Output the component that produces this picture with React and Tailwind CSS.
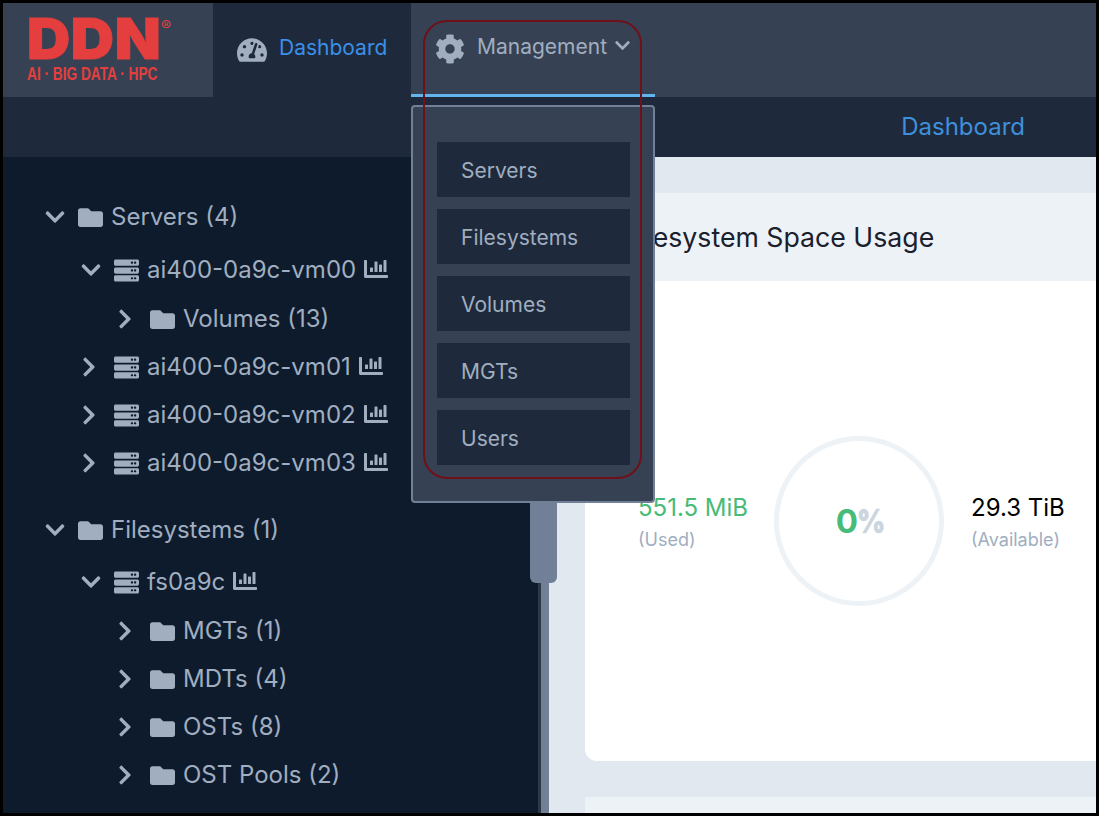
import { FaChartBar, FaChevronDown, FaChevronRight, FaCog, FaFolder, FaServer, FaTachometerAlt } from "react-icons/fa";

const menuItems = ["Servers", "Filesystems", "Volumes", "MGTs", "Users"];

const treeRows = [
  { label: "Servers (4)", level: 0, open: true, icon: FaFolder },
  { label: "ai400-0a9c-vm00", level: 1, open: true, icon: FaServer, chart: true, className: "mt-[5px]" },
  { label: "Volumes (13)", level: 2, icon: FaFolder, className: "mt-px" },
  { label: "ai400-0a9c-vm01", level: 1, icon: FaServer, chart: true },
  { label: "ai400-0a9c-vm02", level: 1, icon: FaServer, chart: true },
  { label: "ai400-0a9c-vm03", level: 1, icon: FaServer, chart: true },
  { label: "Filesystems (1)", level: 0, open: true, icon: FaFolder, className: "mt-[19px]" },
  { label: "fs0a9c", level: 1, open: true, icon: FaServer, chart: true, className: "mt-1" },
  { label: "MGTs (1)", level: 2, icon: FaFolder, className: "mt-px" },
  { label: "MDTs (4)", level: 2, icon: FaFolder },
  { label: "OSTs (8)", level: 2, icon: FaFolder },
  { label: "OST Pools (2)", level: 2, icon: FaFolder }
];

const indents = ["ml-0", "ml-9", "ml-[72px]"];

function TreeRow({ row }) {
  const Icon = row.icon;
  return (
    <div className={`flex h-12 items-center text-[24px] text-[#a0aec0] ${indents[row.level]} ${row.className || ""}`}>
      <span className="flex w-[33px] shrink-0 items-center">
        {row.open ? <FaChevronDown className="-ml-px h-[22px] w-[22px]" /> : <FaChevronRight className="-ml-[3px] h-[22px] w-[22px]" />}
      </span>
      <Icon className="h-[25px] w-[25px] shrink-0" />
      <span className="ml-2 whitespace-nowrap">{row.label}</span>
      {row.chart && <FaChartBar className="ml-2 h-6 w-6 shrink-0 -translate-y-px" />}
    </div>
  );
}

function Logo() {
  return (
    <div className="relative flex h-[94px] w-[210px] shrink-0 flex-col bg-[#364253] pl-6 pt-[10px] text-[#e53e3e]">
      <span className="w-fit origin-left scale-x-[1.05] text-[57px] font-black leading-[51px] tracking-[0.01em] [-webkit-text-stroke:1px_#e53e3e]">
        DDN
      </span>
      <span className="w-fit origin-left scale-x-[0.76] whitespace-nowrap font-['Liberation_Sans'] text-[18px] font-bold leading-[20px]">
        AI · BIG DATA · HPC
      </span>
      <span className="absolute left-[158px] top-[15px] text-[15px] leading-[16px]">®</span>
    </div>
  );
}

function Header() {
  return (
    <div className="flex h-[94px] bg-[#1e2a3b]">
      <Logo />
      <div className="flex w-[198px] shrink-0 items-center pl-6 text-[21px] text-[#3b8fe8]">
        <FaTachometerAlt className="h-[30px] w-[30px] text-[#a0aec0]" />
        <span className="mb-1 ml-3">Dashboard</span>
      </div>
      <div className="flex-1 bg-[#364253]">
        <div className="flex h-[94px] w-[244px] items-center border-b-[3px] border-[#63b3ed] pl-[24px] text-[21px] text-[#a0aec0]">
          <FaCog className="h-[30px] w-[30px]" />
          <span className="mb-1 ml-3">Management</span>
          <FaChevronDown className="mb-[6px] ml-[7px] h-[17px] w-[17px]" />
        </div>
      </div>
    </div>
  );
}

function Dropdown() {
  return (
    <div className="absolute left-[408px] top-[102px] flex h-[398px] w-[244px] flex-col gap-3 rounded border-2 border-[#718096] bg-[#364253] px-6 pt-[35px]">
      {menuItems.map((item) => (
        <div key={item} className="flex h-[55px] w-[193px] shrink-0 items-center bg-[#1e2a3b] pl-6 pt-[2px] text-[21px] text-[#a0aec0]">
          {item}
        </div>
      ))}
    </div>
  );
}

function UsageCard() {
  return (
    <div className="ml-9 mt-9">
      <div className="flex h-[88px] items-center whitespace-nowrap bg-[#edf2f7] pl-[39px] text-[26.7px] text-[#1a202c]">
        Filesystem Space Usage
      </div>
      <div className="flex h-[480px] items-start rounded-bl-xl bg-white pl-[53px] pt-[155px]">
        <div className="mt-[54px] w-[136px] shrink-0">
          <div className="text-[24px] leading-[36px] text-[#48bb78]">551.5 MiB</div>
          <div className="text-[18px] leading-[28px] text-[#a0aec0]">(Used)</div>
        </div>
        <div className="flex h-[170px] w-[170px] shrink-0 items-center justify-center rounded-full border-[5px] border-[#edf2f7] pt-[2px] text-[33px] font-bold">
          <span className="text-[#48bb78]">0</span>
          <span className="-ml-px inline-block w-[25px] origin-left scale-x-[0.82] font-black text-[#cbd5e0] [-webkit-text-stroke:0.5px_#cbd5e0]">%</span>
        </div>
        <div className="ml-[27px] mt-[54px] shrink-0">
          <div className="text-[24px] leading-[36px] text-black">29.3 TiB</div>
          <div className="text-[18px] leading-[28px] text-[#a0aec0]">(Available)</div>
        </div>
      </div>
      <div className="h-9 bg-[#e2e8f0]" />
      <div className="h-20 bg-[#edf2f7]" />
    </div>
  );
}

export default function App() {
  return (
    <div className="relative h-[816px] w-[1099px] overflow-hidden border-[3px] border-black bg-[#e2e8f0] font-['Inter',sans-serif]">
      <Header />
      <div className="flex h-[60px] items-center justify-end bg-[#1e2a3b] pr-[71px] text-[24px] text-[#3f90dc]">
        Dashboard
      </div>
      <div className="flex h-[656px]">
        <div className="w-[535px] shrink-0 bg-[#0e1b2c] pl-[42px] pt-9">
          {treeRows.map((row) => (
            <TreeRow key={row.label} row={row} />
          ))}
        </div>
        <div className="w-[3px] shrink-0 bg-[#2d3748]" />
        <div className="relative w-2 shrink-0 bg-[#718096]">
          <div className="absolute -left-[11px] top-0 h-[426px] w-[27px] rounded-b-md bg-[#718096]" />
        </div>
        <div className="min-w-0 flex-1 overflow-hidden">
          <UsageCard />
        </div>
      </div>
      <Dropdown />
      <div className="pointer-events-none absolute left-[420px] top-[17px] h-[459px] w-[219px] rounded-[24px] border-2 border-[#701018]" />
    </div>
  );
}
